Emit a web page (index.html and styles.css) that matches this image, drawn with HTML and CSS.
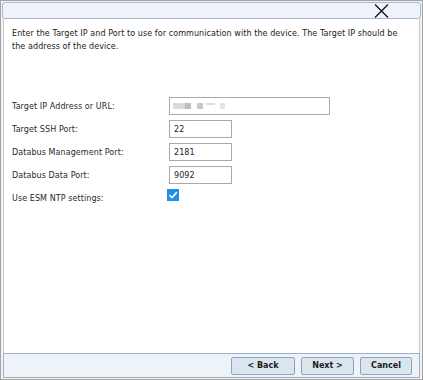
FILE: index.html
```html
<!DOCTYPE html>
<html lang="en">
  <head>
    <meta charset="UTF-8" />
    <title>Device Connection</title>
    <link rel="stylesheet" href="styles.css">
  </head>
  <body>
    <div id="dialog">
      <div class="title-bar">
        <span class="close-btn">
          <svg width="15" height="14" viewBox="0 0 15 14">
            <path d="M1 0.5 L14 13.5 M14 0.5 L1 13.5" stroke="#111" stroke-width="1.3" fill="none" />
          </svg>
        </span>
      </div>

      <div class="content">
        <p class="intro">Enter the Target IP and Port to use for communication with the device. The Target IP should be the address of the device.</p>

        <div class="form">
          <div class="row">
            <label>Target IP Address or URL:</label>
            <div class="input wide">
              <span class="blur b1"></span><span class="blur b2"></span><span class="blur b3"></span><span class="blur b4"></span><span class="blur b5"></span>
            </div>
          </div>
          <div class="row">
            <label>Target SSH Port:</label>
            <input type="text" class="input" value="22" />
          </div>
          <div class="row">
            <label>Databus Management Port:</label>
            <input type="text" class="input" value="2181" />
          </div>
          <div class="row">
            <label>Databus Data Port:</label>
            <input type="text" class="input" value="9092" />
          </div>
          <div class="row">
            <label>Use ESM NTP settings:</label>
            <span class="check">
              <svg width="12" height="12" viewBox="0 0 12 12">
                <path d="M2.5 6.2 L5 8.6 L9.8 3.4" stroke="#fff" stroke-width="1.6" fill="none" />
              </svg>
            </span>
          </div>
        </div>
      </div>

      <div class="footer">
        <button class="btn back">&lt; Back</button>
        <button class="btn next">Next &gt;</button>
        <button class="btn cancel">Cancel</button>
      </div>
    </div>
  </body>
</html>
```

FILE: styles.css
```css
* {
  box-sizing: border-box;
  margin: 0;
  padding: 0;
}
body {
  width: 423px;
  height: 380px;
  font-family: "DejaVu Sans", Verdana, sans-serif;
  font-size: 8px;
  letter-spacing: 0.08px;
  color: #222;
  background: #fff;
}
#dialog {
  width: 423px;
  height: 380px;
  border: 1px solid #a3a3a3;
  background: #f3f3f3;
  padding: 1px;
  display: flex;
  flex-direction: column;
}
.title-bar {
  height: 17px;
  border: 1px solid #a9b8cb;
  border-radius: 3px;
  background: #eef3f9;
  display: flex;
  justify-content: flex-end;
  align-items: center;
  padding-right: 31px;
}
.close-btn {
  display: flex;
}
.content {
  flex: 1;
  margin: 0 1px;
  background: #fff;
  border-left: 1px solid #c9c9c9;
  border-right: 1px solid #c9c9c9;
  padding: 8px 8px 0 8px;
}
.intro {
  line-height: 13px;
  color: #222;
}
.form {
  margin-top: 44px;
  display: flex;
  flex-direction: column;
  gap: 5px;
}
.row {
  display: flex;
  align-items: center;
  height: 18px;
}
label {
  width: 157px;
  color: #2a2a2a;
}
.input {
  width: 63px;
  height: 18px;
  border: 1px solid #a9a9a9;
  background: #fff;
  font-family: inherit;
  font-size: 8px;
  letter-spacing: 0.08px;
  color: #222;
  padding: 0 4px;
  outline: none;
}
.input.wide {
  width: 161px;
  display: flex;
  align-items: center;
  padding-left: 3px;
}
.blur {
  display: inline-block;
  height: 6px;
  background: #d4d4d4;
}
.b1 { width: 12px; background: #dadada; }
.b2 { width: 6px; background: #bdbdbd; margin-right: 6px; }
.b3 { width: 6px; background: #c9c9c9; margin-right: 3px; }
.b4 { width: 9px; height: 2px; margin-top: -4px; background: #dedede; margin-right: 5px; }
.b5 { width: 5px; background: #e3e3e3; }
.check {
  width: 12px;
  height: 12px;
  background: #1e90e8;
  margin-left: -2px;
  margin-top: -6px;
  display: flex;
}
.footer {
  height: 25px;
  margin: 0 1px;
  border: 1px solid #9db1c9;
  background: #eef3f8;
  display: flex;
  justify-content: flex-end;
  align-items: center;
  gap: 6px;
  padding-right: 7px;
}
.btn {
  height: 18px;
  border: 1px solid #8ea4bd;
  border-radius: 2px;
  background: #dbe5ef;
  font-family: inherit;
  font-size: 8px;
  font-weight: bold;
  color: #1a1a1a;
}
.back { width: 64px; }
.next { width: 53px; }
.cancel { width: 52px; }
```
